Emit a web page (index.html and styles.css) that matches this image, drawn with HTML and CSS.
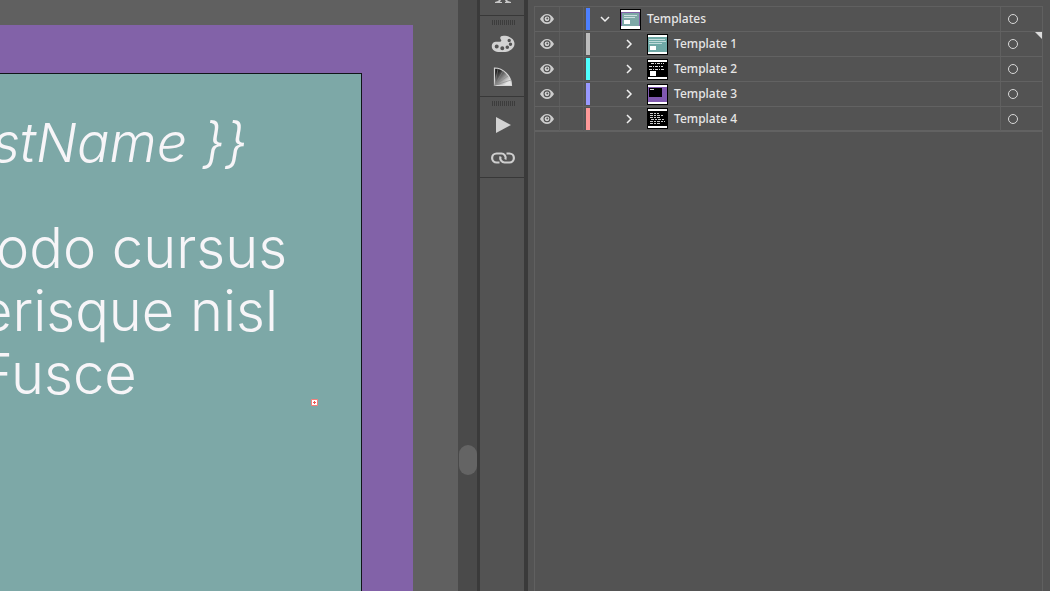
FILE: index.html
```html
<!DOCTYPE html>
<html lang="en">
<head>
<meta charset="utf-8">
<title>Template layers</title>
<meta name="viewport" content="width=device-width, initial-scale=1">
<link rel="stylesheet" href="styles.css">
</head>
<body>
<svg class="defs" aria-hidden="true">
  <symbol id="eye" viewBox="0 0 14 10"><path d="M0 5Q3 0 7 0T14 5Q11 10 7 10T0 5Z" fill="#cdcdcd"/><circle cx="7" cy="4.800" r="3.500" fill="#4c4c4c"/><circle cx="7" cy="4.800" r="2.400" fill="#d4d4d4"/><circle cx="7.300" cy="4.500" r="1" fill="#555"/></symbol>
  <symbol id="right" viewBox="0 0 8 10"><path d="M2 1l4 4-4 4" fill="none" stroke="#f0f0f0" stroke-width="1.500"/></symbol>
  <symbol id="down" viewBox="0 0 10 8"><path d="M1 2l4 4 4-4" fill="none" stroke="#f0f0f0" stroke-width="1.500"/></symbol>
</svg>
<div class="app">
  <main class="canvas">
    <section class="artboard">
      <div class="card">
        <p class="name">stName }}</p>
        <div class="copy">
          <p>odo cursus</p>
          <p class="cut">erisque nisl</p>
          <p class="cut">Fusce</p>
        </div>
        <svg class="overset" viewBox="0 0 7 7" aria-label="Overset text"><path d="M.5.5h6v6h-6z" fill="#fff" stroke="#f27f7b"/><path d="M3.500 2v3M2 3.500h3" stroke="#ee5553"/></svg>
      </div>
    </section>
  </main>
  <div class="scrollbar"><div class="thumb"></div></div>
  <nav class="tools" aria-label="Panels">
    <div class="group first">
      <svg width="18" height="4" viewBox="0 0 18 4"><path d="M1 3V2l3-1 1-1h2L6 2h2v1zM11 0h2l1 1 3 1v1h-6V2h1z" fill="#c8c8c8"/></svg>
    </div>
    <div class="group">
      <div class="grip"></div>
      <button aria-label="Color"><svg width="24" height="18" viewBox="0 0 24 18"><path fill="#d2d2d2" fill-rule="evenodd" d="M9.800 4.500C8.500 2.500 9.500.8 12.500.8 19 .8 23.500 4 23.500 8.800S18.500 17 12.500 17H9C4 17 .8 15 .8 11.500.8 8 3 6.800 5.500 6.800c3 0 6 0 4.300-2.300ZM3.700 11.500a2 2 0 1 0 4 0a2 2 0 1 0-4 0M9.300 13.200a2 2 0 1 0 4 0a2 2 0 1 0-4 0M14.500 12.300a1.800 1.800 0 1 0 3.600 0a1.800 1.800 0 1 0-3.600 0M17.800 9.300a1.700 1.700 0 1 0 3.400 0a1.700 1.700 0 1 0-3.400 0M16.500 5.500a1.700 1.700 0 1 0 3.400 0a1.700 1.700 0 1 0-3.400 0"/></svg></button>
      <button aria-label="Color guide"><svg width="20" height="20" viewBox="0 0 20 20"><defs><linearGradient id="fan" x1="0" y1="0" x2="1" y2="1"><stop offset=".2" stop-color="#222"/><stop offset=".8" stop-color="#e5e5e5"/></linearGradient></defs><path d="M1.500 1v17.500h17C18.500 9 10 1 1.500 1Z" fill="url(#fan)" stroke="#d5d5d5" stroke-width="1.200"/><path d="M1.500 18.500L5 2M1.500 18.500L10 4M1.500 18.500L15 9M1.500 18.500L18 13" stroke="#888" stroke-width=".6"/></svg></button>
    </div>
    <div class="group">
      <div class="grip"></div>
      <button aria-label="Actions"><svg width="18" height="18" viewBox="0 0 18 18"><path d="M2 1v16l15-8z" fill="#d2d2d2"/></svg></button>
      <button aria-label="Links"><svg width="24" height="12" viewBox="0 0 24 12"><g fill="none" stroke="#cecece" stroke-width="2.200"><path d="M8.500 10.500H5.600a4.300 4.300 0 0 1 0-9H10a4.400 4.400 0 0 1 4.400 6"/><path d="M15.500 1.500h2.900a4.300 4.300 0 0 1 0 9H14a4.400 4.400 0 0 1-4.400-6"/></g></svg></button>
    </div>
  </nav>
  <aside class="panel">
    <ul class="layers">
      <li class="row">
        <button class="eye" aria-label="Hide Templates"><svg><use href="#eye"/></svg></button><span class="lock"></span><span class="swatch blue"></span>
        <button class="toggle" aria-label="Collapse"><svg class="down"><use href="#down"/></svg></button>
        <svg class="art" viewBox="0 0 21 21"><path fill="#000" d="M0 0h21v21H0z"/><path fill="#fff" d="M1 1h19v19H1z"/><path fill="#8262a8" d="M1 3h19v14H1z"/><path fill="#7da8a7" d="M2 4h17v13H2z"/><path d="M4 6.500h13M4 8.500h11" stroke="#cce0e0"/><path fill="#fff" d="M4 11h6v4H4z"/></svg>
        <span class="label">Templates</span><button class="target" aria-label="Target Templates"><i></i></button>
      </li>
      <li class="row child">
        <button class="eye" aria-label="Hide Template 1"><svg><use href="#eye"/></svg></button><span class="lock"></span><span class="swatch gray"></span>
        <button class="toggle" aria-label="Expand"><svg><use href="#right"/></svg></button>
        <svg class="art" viewBox="0 0 21 21"><path fill="#000" d="M0 0h21v21H0z"/><path fill="#fff" d="M1 1h19v19H1z"/><path fill="#6fa9a6" d="M1 3h19v15H1z"/><path d="M2 5.500h16M2 7.500h17M2 9.500h13" stroke="#bfdbda"/><path fill="#fff" d="M3 12h6v4H3z"/></svg>
        <span class="label">Template 1</span><button class="target" aria-label="Target Template 1"><i></i></button><span class="corner"></span>
      </li>
      <li class="row child">
        <button class="eye" aria-label="Hide Template 2"><svg><use href="#eye"/></svg></button><span class="lock"></span><span class="swatch cyan"></span>
        <button class="toggle" aria-label="Expand"><svg><use href="#right"/></svg></button>
        <svg class="art" viewBox="0 0 21 21"><path fill="#000" d="M0 0h21v21H0z"/><path fill="#fff" d="M1 1h19v2H1zM1 18h19v2H1zM3 12h6v5H3z"/><path d="M4 4.500h13M2 7.500h14M2 10.500h15" stroke="#ddd" stroke-dasharray="3 1 1 1"/></svg>
        <span class="label">Template 2</span><button class="target" aria-label="Target Template 2"><i></i></button>
      </li>
      <li class="row child">
        <button class="eye" aria-label="Hide Template 3"><svg><use href="#eye"/></svg></button><span class="lock"></span><span class="swatch violet"></span>
        <button class="toggle" aria-label="Expand"><svg><use href="#right"/></svg></button>
        <svg class="art" viewBox="0 0 21 21"><path fill="#000" d="M0 0h21v21H0z"/><path fill="#fff" d="M1 1h19v19H1z"/><path fill="#8058b0" d="M1 3h19v15H1z"/><path fill="#000" d="M2 4h13v9H2z"/><path d="M3 5.500h4" stroke="#ccc"/></svg>
        <span class="label">Template 3</span><button class="target" aria-label="Target Template 3"><i></i></button>
      </li>
      <li class="row child">
        <button class="eye" aria-label="Hide Template 4"><svg><use href="#eye"/></svg></button><span class="lock"></span><span class="swatch pink"></span>
        <button class="toggle" aria-label="Expand"><svg><use href="#right"/></svg></button>
        <svg class="art" viewBox="0 0 21 21"><path fill="#000" d="M0 0h21v21H0z"/><path fill="#fff" d="M1 1h19v2H1zM1 18h19v2H1z"/><path d="M3 5.500h9M3 7.500h13M3 9.500h11M4 11.500h14M3 13.500h15M3 15.500h10" stroke="#ccc" stroke-dasharray="3 1 2 1"/></svg>
        <span class="label">Template 4</span><button class="target" aria-label="Target Template 4"><i></i></button>
      </li>
    </ul>
  </aside>
</div>
</body>
</html>
```
FILE: styles.css
```css
* { box-sizing: border-box; }
body { margin: 0; background: #535353; color: #e6e6e6; font-family: "Noto Sans", sans-serif; }
p, ul { margin: 0; padding: 0; }
button { border: 0; padding: 0; background: none; display: grid; place-items: center; }
svg { display: block; }
.defs { display: none; }
.app { display: grid; grid-template-columns: minmax(0, 458fr) auto auto minmax(0, 522fr); grid-template-rows: 100%; height: 100vh; overflow: hidden; }

.canvas { display: flex; background: #606060; padding: 25px 45px 0 0; overflow: hidden; }
.artboard { flex: 1; min-width: 0; display: flex; background: #8262a8; padding: 48px 51px 0 0; }
.card { flex: 1; min-width: 0; position: relative; background: #7da8a7; border: solid #101418; border-width: 1px 1px 0 0; padding-top: 37px; color: #f7f5f8; font-family: Inter, sans-serif; font-weight: 300; font-size: 56px; line-height: 63px; white-space: nowrap; overflow: hidden; }
.name { margin-left: -8px; font-size: 54px; font-style: italic; }
.copy { margin: 43px 0 0 -4px; }
.cut { margin-left: -16px; }
.overset { position: absolute; left: 311px; top: 325px; width: 7px; height: 7px; }

.scrollbar { width: 19px; background: #4a4a4a; display: flex; flex-direction: column; align-items: center; }
.scrollbar::before { content: ""; flex: 445; }
.scrollbar::after { content: ""; flex: 116; }
.thumb { width: 18px; height: 30px; border-radius: 9px; background: #646464; }

.tools { width: 51px; border: solid #3a3a3a; border-width: 0 4px 0 3px; background: #535353; }
.group { border-bottom: 1px solid #383838; display: flex; flex-direction: column; align-items: center; padding: 4px 0 3px 2px; }
.group.first { height: 16px; padding: 0 0 0 2px; }
.group button { width: 36px; height: 33px; }
.grip { width: 23px; height: 5px; margin-bottom: 2px; background: repeating-linear-gradient(90deg, #3c3c3c 0 1px, #535353 1px 2px); }

.panel { display: flex; padding: 6px 7px 0 6px; background: #535353; }
.layers { flex: 1; min-width: 0; list-style: none; border: 1px solid #606060; border-bottom: 0; }
.row { position: relative; display: flex; align-items: center; height: 25px; border-bottom: 1px solid #626262; font-size: 12px; font-weight: 500; }
.row > * { flex: none; }
.row:last-child { border-bottom-width: 2px; }
.eye, .lock { width: 25px; height: 24px; border-right: 1px solid #5d5d5d; }
.lock { width: 24px; }
.eye svg { width: 14px; height: 10px; }
.swatch { width: 4px; height: 22px; margin-left: 2px; }
.blue { background: #4d80ff; }
.gray { background: #bcbcbc; }
.cyan { background: #4fffff; }
.violet { background: #9999ff; }
.pink { background: #ff9999; }
.toggle { width: 30px; height: 24px; }
.toggle svg { width: 8px; height: 10px; }
.toggle .down { width: 10px; height: 8px; }
.child .toggle { width: 28px; margin-left: 25px; }
.child .art { margin-left: 4px; }
.art { width: 21px; height: 21px; }
.row .label { flex: 1; margin-left: 6px; line-height: 26px; }
.target { width: 42px; height: 24px; border-left: 1px solid #606060; justify-items: start; padding-left: 7px; }
.target i { width: 10px; height: 10px; border: 1px solid #d8d8d8; border-radius: 50%; }
.corner { position: absolute; right: 0; top: 0; width: 7px; height: 7px; background: #dcdcdc; clip-path: polygon(0 0, 100% 0, 100% 100%); }
```
